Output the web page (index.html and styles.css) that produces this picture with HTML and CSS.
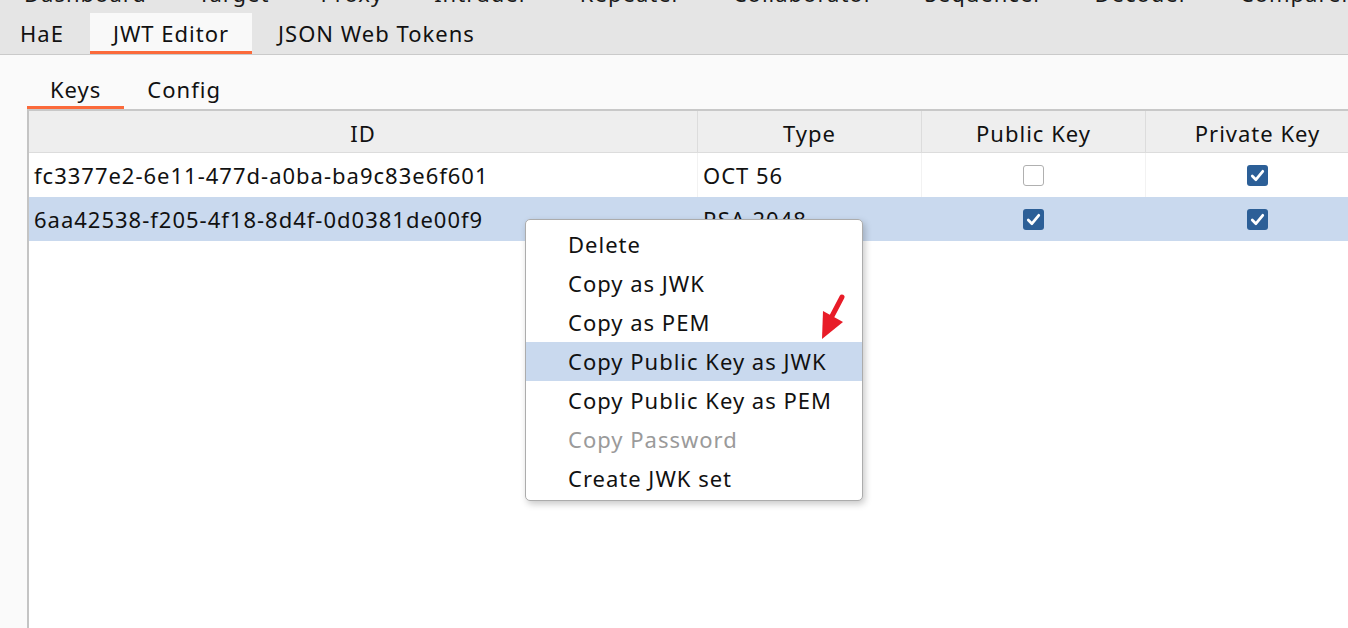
FILE: index.html
```html
<!DOCTYPE html>
<html>
<head>
<meta charset="utf-8">
<link rel="stylesheet" href="styles.css">
</head>
<body>
<div class="app">
  <div class="topbar">
    <div class="toprow">
      <span class="ttab">Dashboard</span>
      <span class="ttab">Target</span>
      <span class="ttab">Proxy</span>
      <span class="ttab">Intruder</span>
      <span class="ttab">Repeater</span>
      <span class="ttab">Collaborator</span>
      <span class="ttab">Sequencer</span>
      <span class="ttab">Decoder</span>
      <span class="ttab">Comparer</span>
    </div>
    <div class="subtabs">
      <span class="stab">HaE</span>
      <span class="stab active">JWT Editor</span>
      <span class="stab">JSON Web Tokens</span>
    </div>
  </div>
  <div class="content">
    <div class="innertabs">
      <span class="itab active">Keys</span>
      <span class="itab">Config</span>
    </div>
    <div class="table">
      <div class="thead">
        <div class="th">ID</div>
        <div class="th">Type</div>
        <div class="th">Public Key</div>
        <div class="th">Private Key</div>
      </div>
      <div class="tr">
        <div class="td">fc3377e2-6e11-477d-a0ba-ba9c83e6f601</div>
        <div class="td">OCT 56</div>
        <div class="td center"><span class="cb"></span></div>
        <div class="td center"><span class="cb checked"><svg viewBox="0 0 20 20"><path d="M5 10.5 L8.5 14 L15 6" /></svg></span></div>
      </div>
      <div class="tr selected">
        <div class="td">6aa42538-f205-4f18-8d4f-0d0381de00f9</div>
        <div class="td">RSA 2048</div>
        <div class="td center"><span class="cb checked"><svg viewBox="0 0 20 20"><path d="M5 10.5 L8.5 14 L15 6" /></svg></span></div>
        <div class="td center"><span class="cb checked"><svg viewBox="0 0 20 20"><path d="M5 10.5 L8.5 14 L15 6" /></svg></span></div>
      </div>
    </div>
  </div>

  <div class="menu">
    <div class="mi">Delete</div>
    <div class="mi">Copy as JWK</div>
    <div class="mi">Copy as PEM</div>
    <div class="mi hl">Copy Public Key as JWK</div>
    <div class="mi">Copy Public Key as PEM</div>
    <div class="mi disabled">Copy Password</div>
    <div class="mi">Create JWK set</div>
  </div>

  <svg class="arrow" viewBox="815 290 35 55" width="35" height="55">
    <line x1="842" y1="297" x2="831" y2="318" stroke="#e81c28" stroke-width="5" stroke-linecap="round"/>
    <polygon points="822,339 823,311 843,322" fill="#e81c28"/>
  </svg>
</div>
</body>
</html>
```

FILE: styles.css
```css
* { box-sizing: border-box; }
html, body {
  margin: 0;
  padding: 0;
  width: 1348px;
  height: 628px;
  overflow: hidden;
  background: #fafafa;
  font-family: "Noto Sans", "Open Sans", sans-serif;
  font-size: 22px;
  letter-spacing: 1px;
  color: #111;
}
.app {
  position: relative;
  width: 1348px;
  height: 628px;
  display: flex;
  flex-direction: column;
}
.topbar {
  background: #e5e5e5;
  border-bottom: 1px solid #cacaca;
  flex: none;
}
.toprow {
  height: 13px;
  overflow: hidden;
  display: flex;
  margin-left: -1.5px;
}
.ttab {
  display: block;
  padding: 0 25.5px;
  line-height: 22px;
  margin-top: -18px;
  white-space: nowrap;
  color: #1a1a1a;
}
.subtabs {
  display: flex;
  gap: 3px;
  height: 41px;
  margin-left: -3px;
}
.stab {
  padding: 2px 23px 0;
  line-height: 36px;
  border-bottom: 3px solid transparent;
  white-space: nowrap;
}
.stab.active {
  background: #f9f9f9;
  border-bottom-color: #fb6a3b;
}
.content {
  flex: 1;
  display: flex;
  flex-direction: column;
  background: #fafafa;
  padding-top: 15px;
  padding-left: 27px;
  min-height: 0;
}
.innertabs {
  display: flex;
  flex: none;
}
.itab {
  padding: 3px 23px 0;
  line-height: 33px;
  border-bottom: 3px solid transparent;
}
.itab.active {
  border-bottom-color: #fb6a3b;
}
.table {
  flex: 1;
  background: #fff;
  border-top: 2px solid #c8c8c8;
  border-left: 2px solid #c4c4c4;
  width: 1400px;
}
.thead, .tr {
  display: grid;
  grid-template-columns: 669px 224px 224px 224px;
}
.thead {
  background: #eeeeee;
  height: 42px;
  border-bottom: 1px solid #dcdcdc;
}
.th {
  text-align: center;
  padding-top: 3px;
  line-height: 38px;
  border-right: 1px solid #dcdcdc;
  white-space: nowrap;
}
.tr {
  height: 44px;
}
.tr.selected {
  background: #c9d9ee;
}
.td {
  line-height: 44px;
  padding-left: 5px;
  border-right: 1px solid #f2f2f2;
  white-space: nowrap;
  overflow: hidden;
}
.tr.selected .td {
  border-right-color: transparent;
}
.td.center {
  padding-left: 0;
  display: flex;
  align-items: center;
  justify-content: center;
}
.cb {
  width: 21px;
  height: 21px;
  border: 1.5px solid #b0b0b0;
  border-radius: 3px;
  background: #fff;
  display: block;
}
.cb.checked {
  border: none;
  background: #2c5f97;
}
.cb svg {
  width: 21px;
  height: 21px;
  display: block;
}
.cb svg path {
  fill: none;
  stroke: #fff;
  stroke-width: 2.6;
  stroke-linecap: round;
  stroke-linejoin: round;
}
.menu {
  position: absolute;
  left: 525px;
  top: 219px;
  width: 338px;
  background: #fff;
  border: 1px solid #acacac;
  border-radius: 5px;
  box-shadow: 2px 3px 7px rgba(0, 0, 0, 0.22);
  padding: 5px 0 2px;
}
.mi {
  height: 39px;
  line-height: 39px;
  padding-left: 42px;
  white-space: nowrap;
}
.mi.hl {
  background: #c9d9ee;
}
.mi.disabled {
  color: #9a9a9a;
}
.arrow {
  position: absolute;
  left: 815px;
  top: 290px;
}
```
